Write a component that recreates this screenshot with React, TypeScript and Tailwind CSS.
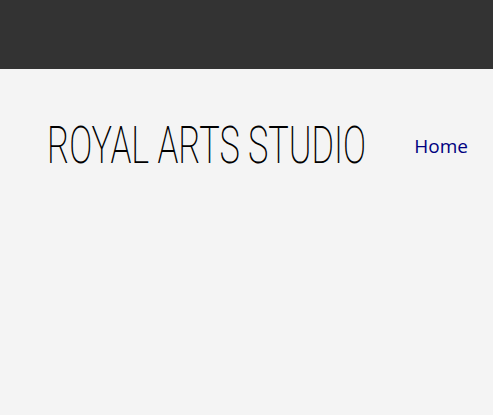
export default function App() {
  return (
    <div className="min-h-[415px] bg-[#f4f4f4]">
      <div className="h-[69px] bg-[#333333]" />
      <div className="flex items-start justify-between pl-[47px] pr-[25px] pt-[48px]">
        <h1 className="w-[320px] shrink-0 whitespace-nowrap text-[52px] font-extralight leading-[52px] text-black">
          <span
            className="-mr-[170px] inline-block origin-left scale-x-[0.66]"
            style={{ fontFamily: 'Roboto, sans-serif' }}
          >
            ROYAL ARTS STUDIO
          </span>
        </h1>
        <nav className="mt-[17px]">
          <a
            href="#"
            className="text-[19px] leading-[25px] text-[#000080]"
            style={{ fontFamily: '"Open Sans", sans-serif' }}
          >
            Home
          </a>
        </nav>
      </div>
    </div>
  );
}
